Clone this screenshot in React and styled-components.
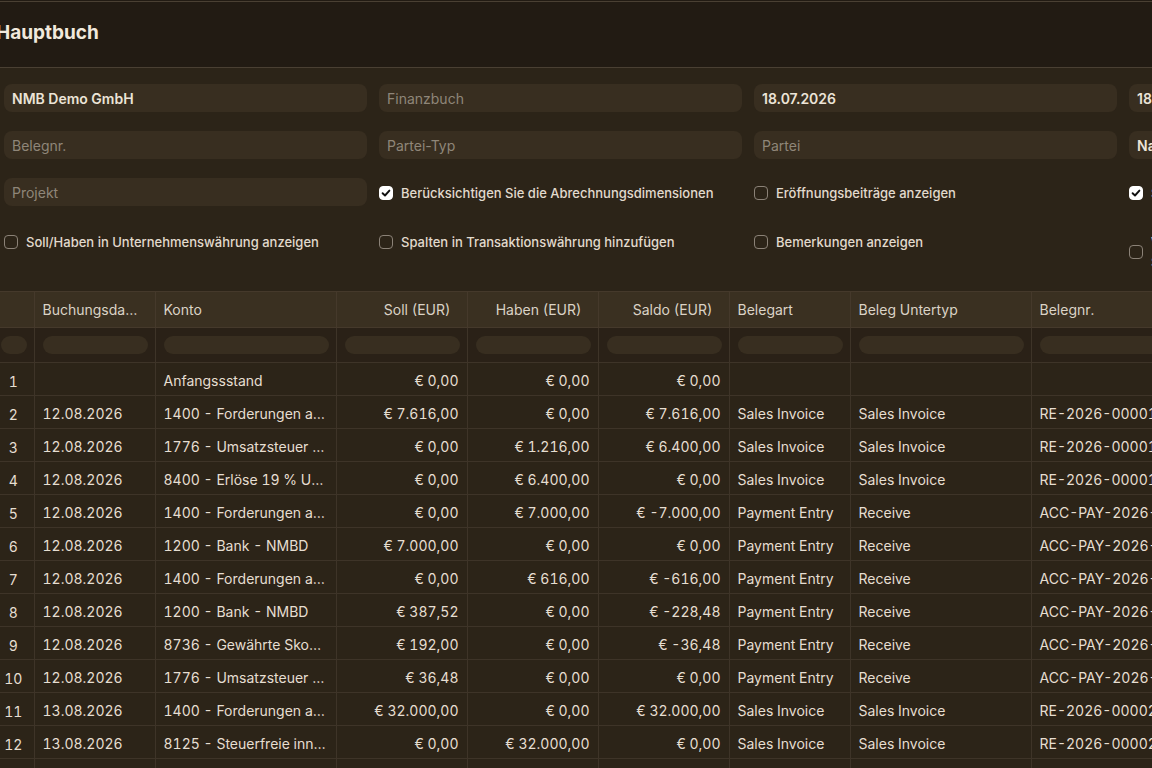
import React from 'react';
import styled, { createGlobalStyle } from 'styled-components';

const GlobalStyle = createGlobalStyle`
    html, body {
        margin: 0;
        padding: 0;
        background: #2c2418;
        overflow: hidden;
    }
    body {
        font-family: Inter, "Noto Sans", sans-serif;
        color: #e8e0d3;
    }
`;

const Page = styled.div`
    width: 1900px;
    margin-left: -7px;
`;

const Header = styled.header`
    display: flex;
    align-items: center;
    height: 67px;
    margin-top: 1px;
    padding: 0 0 4px 3px;
    box-sizing: border-box;
    background: #221b13;
    border-top: 1px solid #4a4033;
    border-bottom: 1px solid #4a4033;
    box-shadow: 0 -1px 0 #221b13;
`;

const Title = styled.h1`
    margin: 0;
    font-size: 19px;
    font-weight: 700;
    color: #f1e9dc;
`;

const FilterGrid = styled.section`
    display: grid;
    grid-template-columns: repeat(4, 363px);
    column-gap: 12px;
    row-gap: 19px;
    align-items: start;
    padding: 16px 0 14px 11px;
`;

const Field = styled.div`
    height: 28px;
    display: flex;
    align-items: center;
    padding: 0 8px;
    border-radius: 8px;
    background: #382e20;
    font-size: 14px;
    white-space: nowrap;
    overflow: hidden;
    color: ${p => (p.$placeholder ? '#8f8679' : '#ece4d7')};
    font-weight: ${p => (p.$placeholder ? 400 : 600)};
`;

const CheckField = styled.label`
    display: flex;
    align-items: center;
    gap: 8px;
    padding: 5px 0;
    font-size: 13px;
    font-weight: 500;
    line-height: 20px;
    color: #e2dacd;
`;

const Box = styled.span`
    flex: none;
    width: 14px;
    height: 14px;
    box-sizing: border-box;
    border-radius: 4px;
    display: flex;
    align-items: center;
    justify-content: center;
    background: ${p => (p.$checked ? '#ffffff' : 'transparent')};
    border: 1px solid ${p => (p.$checked ? '#ffffff' : '#8b8277')};
`;

const Table = styled.table`
    table-layout: fixed;
    border-collapse: collapse;
    width: 1893px;
    border-top: 1px solid #45392b;
    font-variant-numeric: tabular-nums;
`;

const HeadCell = styled.th`
    height: 36px;
    padding: 0 16px 0 8px;
    box-sizing: border-box;
    background: #3a3021;
    border-right: 1px solid #45392b;
    border-bottom: 1px solid #45392b;
    font-size: 14px;
    font-weight: 400;
    color: #dbd3c6;
    text-align: ${p => p.$align || 'left'};
    white-space: nowrap;
    overflow: hidden;
    text-overflow: ellipsis;
`;

const FilterCell = styled.td`
    height: 35px;
    padding: 0 7px 0 8px;
    box-sizing: border-box;
    background: #2a2117;
    border-right: 1px solid #3e3428;
    border-bottom: 1px solid #3e3428;
`;

const Pill = styled.div`
    height: 18px;
    border-radius: 9px;
    background: #382e20;
`;

const Cell = styled.td`
    height: 33px;
    padding: 3px 8px 0;
    box-sizing: border-box;
    border-right: 1px solid #3e3428;
    border-bottom: 1px solid #3e3428;
    font-size: 14px;
    line-height: 18px;
    color: #e6ded1;
    text-align: ${p => p.$align || 'left'};
    white-space: nowrap;
    overflow: hidden;
    text-overflow: ellipsis;
`;

const RowNum = styled(Cell)`
    padding: 6px 0 0;
    text-align: center;
`;

const Check = () => (
    <svg width="10" height="10" viewBox="0 0 10 10">
        <path d="M1.6 5.2 L4 7.5 L8.4 2.6" fill="none" stroke="#111" strokeWidth="1.9" strokeLinecap="round" strokeLinejoin="round" />
    </svg>
);

const CheckBox = ({ checked, children }) => (
    <CheckField>
        <Box $checked={checked}>{checked && <Check />}</Box>
        <span>{children}</span>
    </CheckField>
);

const columns = [
    { title: '', width: 41 },
    { title: 'Buchungsdatum', width: 121 },
    { title: 'Konto', width: 181 },
    { title: 'Soll (EUR)', width: 131, align: 'right' },
    { title: 'Haben (EUR)', width: 131, align: 'right' },
    { title: 'Saldo (EUR)', width: 131, align: 'right' },
    { title: 'Belegart', width: 121 },
    { title: 'Beleg Untertyp', width: 181 },
    { title: 'Belegnr.', width: 181 },
    { title: 'Gegenkonto', width: 181 },
    { title: 'Partei-Typ', width: 121 },
    { title: 'Partei', width: 181 },
    { title: 'Bemerkungen', width: 291 },
];

const FORD = '1400 - Forderungen aus Lieferungen und Leistungen - NMBD';
const UST = '1776 - Umsatzsteuer 19 % - NMBD';
const BANK = '1200 - Bank - NMBD';
const SI = ['Sales Invoice', 'Sales Invoice'];
const PE = ['Payment Entry', 'Receive'];

const rows = [
    ['', 'Anfangssstand', '€ 0,00', '€ 0,00', '€ 0,00', '', '', ''],
    ['12.08.2026', FORD, '€ 7.616,00', '€ 0,00', '€ 7.616,00', ...SI, 'RE-2026-00001'],
    ['12.08.2026', UST, '€ 0,00', '€ 1.216,00', '€ 6.400,00', ...SI, 'RE-2026-00001'],
    ['12.08.2026', '8400 - Erlöse 19 % USt - NMBD', '€ 0,00', '€ 6.400,00', '€ 0,00', ...SI, 'RE-2026-00001'],
    ['12.08.2026', FORD, '€ 0,00', '€ 7.000,00', '€ -7.000,00', ...PE, 'ACC-PAY-2026-00001'],
    ['12.08.2026', BANK, '€ 7.000,00', '€ 0,00', '€ 0,00', ...PE, 'ACC-PAY-2026-00001'],
    ['12.08.2026', FORD, '€ 0,00', '€ 616,00', '€ -616,00', ...PE, 'ACC-PAY-2026-00002'],
    ['12.08.2026', BANK, '€ 387,52', '€ 0,00', '€ -228,48', ...PE, 'ACC-PAY-2026-00002'],
    ['12.08.2026', '8736 - Gewährte Skonti 19 % USt - NMBD', '€ 192,00', '€ 0,00', '€ -36,48', ...PE, 'ACC-PAY-2026-00002'],
    ['12.08.2026', UST, '€ 36,48', '€ 0,00', '€ 0,00', ...PE, 'ACC-PAY-2026-00002'],
    ['13.08.2026', FORD, '€ 32.000,00', '€ 0,00', '€ 32.000,00', ...SI, 'RE-2026-00002'],
    ['13.08.2026', '8125 - Steuerfreie innergemeinschaftliche Lieferungen - NMBD', '€ 0,00', '€ 32.000,00', '€ 0,00', ...SI, 'RE-2026-00002'],
    ['13.08.2026', FORD, '€ 0,00', '€ 0,00', '€ 0,00', ...SI, 'RE-2026-00002'],
];

export default function App() {
    return (
        <Page>
            <GlobalStyle />
            <Header>
                <Title>Hauptbuch</Title>
            </Header>
            <FilterGrid>
                <Field>NMB Demo GmbH</Field>
                <Field $placeholder>Finanzbuch</Field>
                <Field>18.07.2026</Field>
                <Field>18.08.2026</Field>

                <Field $placeholder>Belegnr.</Field>
                <Field $placeholder>Partei-Typ</Field>
                <Field $placeholder>Partei</Field>
                <Field>Nach Beleg gruppiert (konsolidiert)</Field>

                <Field $placeholder>Projekt</Field>
                <CheckBox checked>Berücksichtigen Sie die Abrechnungsdimensionen</CheckBox>
                <CheckBox>Eröffnungsbeiträge anzeigen</CheckBox>
                <CheckBox checked>Standardbuchungen des Finanzbuchs einbeziehen</CheckBox>

                <CheckBox>Soll/Haben in Unternehmenswährung anzeigen</CheckBox>
                <CheckBox>Spalten in Transaktionswährung hinzufügen</CheckBox>
                <CheckBox>Bemerkungen anzeigen</CheckBox>
                <CheckBox>Wechselkursgewinne und -verluste sowie Soll-/Habennotizen in den Buchungen ignorieren</CheckBox>
            </FilterGrid>
            <Table>
                <colgroup>
                    {columns.map((c, i) => <col key={i} style={{ width: c.width }} />)}
                </colgroup>
                <thead>
                    <tr>
                        {columns.map((c, i) => (
                            <HeadCell key={i} $align={c.align}>{c.title}</HeadCell>
                        ))}
                    </tr>
                    <tr>
                        {columns.map((c, i) => (
                            <FilterCell key={i}><Pill /></FilterCell>
                        ))}
                    </tr>
                </thead>
                <tbody>
                    {rows.map((r, i) => (
                        <tr key={i}>
                            <RowNum>{i + 1}</RowNum>
                            {columns.slice(1).map((c, j) => (
                                <Cell key={j} $align={c.align}>{r[j] || ''}</Cell>
                            ))}
                        </tr>
                    ))}
                </tbody>
            </Table>
        </Page>
    );
}
